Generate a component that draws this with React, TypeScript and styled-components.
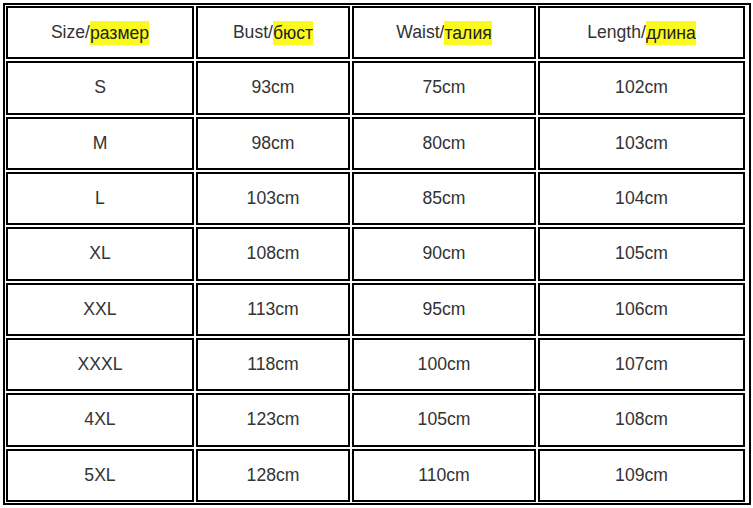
import styled, { createGlobalStyle } from 'styled-components';

const GlobalStyle = createGlobalStyle`
  html, body {
    margin: 0;
    padding: 0;
    background: #fff;
  }
  body {
    font-family: "Liberation Sans", Arial, sans-serif;
  }
`;

const Page = styled.div`
  padding: 3px 0 0 3px;
`;

const Table = styled.div`
  box-sizing: border-box;
  width: 748px;
  height: 502px;
  border: 2px solid #000;
  padding: 1px;
  display: grid;
  grid-template-columns: 188px 154px 184px 207px;
  grid-template-rows: repeat(9, 1fr);
  gap: 2px;
  background: #fff;
`;

const Cell = styled.div`
  box-sizing: border-box;
  border: 2px solid #000;
  display: flex;
  align-items: center;
  justify-content: center;
  font-size: 17.6px;
  color: #333;
`;

const Mark = styled.span`
  background: #fafa1e;
  color: #222;
  padding: 2px 0 1px;
`;

const headers = [
  ['Size/', 'размер'],
  ['Bust/', 'бюст'],
  ['Waist/', 'талия'],
  ['Length/', 'длина'],
];

const rows = [
  ['S', '93cm', '75cm', '102cm'],
  ['M', '98cm', '80cm', '103cm'],
  ['L', '103cm', '85cm', '104cm'],
  ['XL', '108cm', '90cm', '105cm'],
  ['XXL', '113cm', '95cm', '106cm'],
  ['XXXL', '118cm', '100cm', '107cm'],
  ['4XL', '123cm', '105cm', '108cm'],
  ['5XL', '128cm', '110cm', '109cm'],
];

export default function App() {
  return (
    <>
      <GlobalStyle />
      <Page>
        <Table>
          {headers.map(([en, ru]) => (
            <Cell key={en}>
              {en}
              <Mark>{ru}</Mark>
            </Cell>
          ))}
          {rows.map((row) =>
            row.map((v, i) => <Cell key={row[0] + i}>{v}</Cell>)
          )}
        </Table>
      </Page>
    </>
  );
}
